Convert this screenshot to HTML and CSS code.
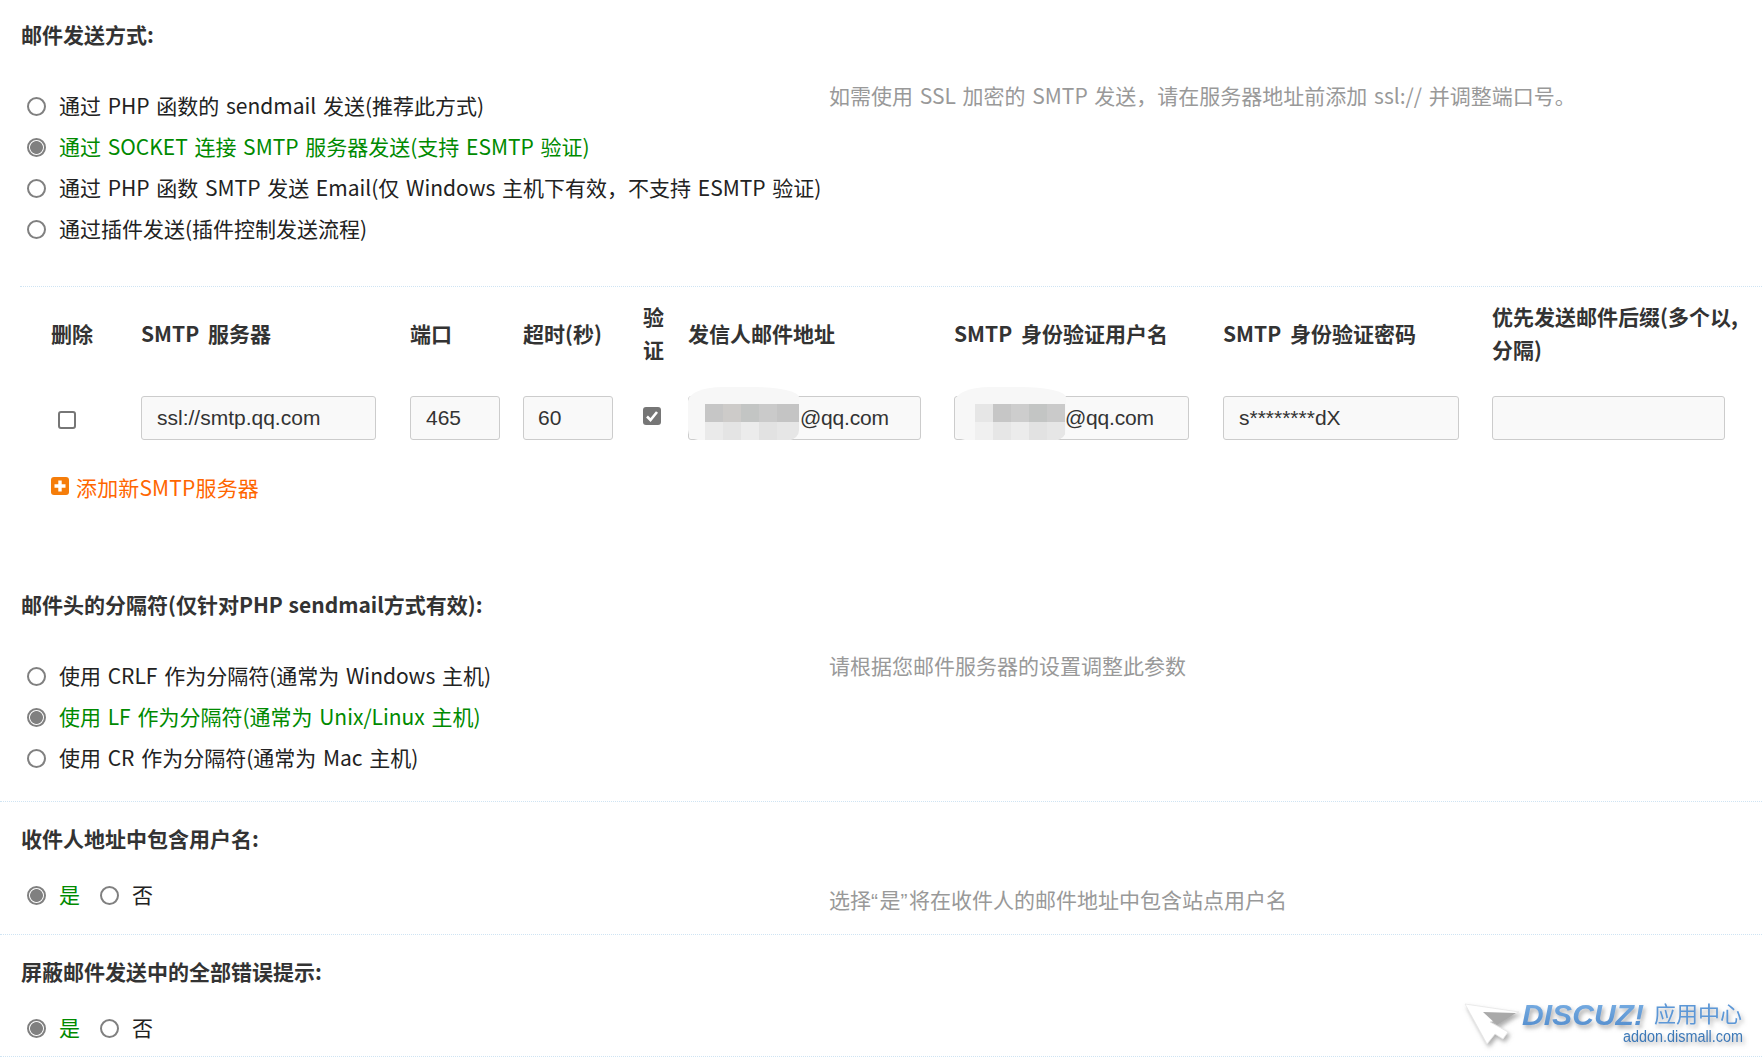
FILE: index.html
```html
<!DOCTYPE html>
<html lang="zh-CN">
<head>
<meta charset="utf-8">
<title>邮件设置</title>
<link rel="stylesheet" href="styles.css">
</head>
<body>
<div class="page">
  <section class="section s1">
    <h3 class="title">邮件发送方式:</h3>
    <div class="body b-large">
      <div class="options">
        <label class="opt"><input type="radio" name="m">通过 PHP 函数的 sendmail 发送(推荐此方式)</label>
        <label class="opt on"><input type="radio" name="m" checked>通过 SOCKET 连接 SMTP 服务器发送(支持 ESMTP 验证)</label>
        <label class="opt"><input type="radio" name="m">通过 PHP 函数 SMTP 发送 Email(仅 Windows 主机下有效，不支持 ESMTP 验证)</label>
        <label class="opt"><input type="radio" name="m">通过插件发送(插件控制发送流程)</label>
      </div>
      <p class="hint">如需使用 SSL 加密的 SMTP 发送，请在服务器地址前添加 ssl:// 并调整端口号。</p>
    </div>
  </section>

  <section class="smtp">
    <div class="grid head">
      <div>删除</div><div>SMTP 服务器</div><div>端口</div><div>超时(秒)</div><div class="narrow">验证</div><div>发信人邮件地址</div><div>SMTP 身份验证用户名</div><div>SMTP 身份验证密码</div><div class="suffix">优先发送邮件后缀(多个以,分隔)</div>
    </div>
    <div class="grid row">
      <div class="cell"><input type="checkbox" class="box del"></div>
      <div class="cell"><input class="txt w234" value="ssl://smtp.qq.com"></div>
      <div class="cell"><input class="txt w90" value="465"></div>
      <div class="cell"><input class="txt w90 p60" value="60"></div>
      <div class="cell"><input type="checkbox" class="box auth" checked></div>
      <div class="cell masked"><input class="txt w232 mailtxt" value="@qq.com"><span class="mask m1"></span></div>
      <div class="cell masked"><input class="txt w235 mailtxt2" value="@qq.com"><span class="mask m2"></span></div>
      <div class="cell"><input class="txt w236" value="s********dX"></div>
      <div class="cell"><input class="txt w233" value=""></div>
    </div>
    <a class="add"><svg class="plus" viewBox="0 0 18 18" aria-hidden="true"><rect width="18" height="18" rx="3" fill="#f57d0a"/><path d="M7.3 3.5h3.4v3.8h3.8v3.4h-3.8v3.8H7.3v-3.8H3.5V7.3h3.8z" fill="#fff"/></svg>添加新SMTP服务器</a>
  </section>

  <section class="section s2">
    <h3 class="title">邮件头的分隔符(仅针对PHP sendmail方式有效):</h3>
    <div class="body b-large">
      <div class="options">
        <label class="opt"><input type="radio" name="s">使用 CRLF 作为分隔符(通常为 Windows 主机)</label>
        <label class="opt on"><input type="radio" name="s" checked>使用 LF 作为分隔符(通常为 Unix/Linux 主机)</label>
        <label class="opt"><input type="radio" name="s">使用 CR 作为分隔符(通常为 Mac 主机)</label>
      </div>
      <p class="hint">请根据您邮件服务器的设置调整此参数</p>
    </div>
  </section>

  <section class="section s3">
    <h3 class="title">收件人地址中包含用户名:</h3>
    <div class="body">
      <div class="options inline">
        <label class="opt on"><input type="radio" name="u" checked>是</label>
        <label class="opt"><input type="radio" name="u">否</label>
      </div>
      <p class="hint">选择<span class="q">“</span>是<span class="q">”</span>将在收件人的邮件地址中包含站点用户名</p>
    </div>
  </section>

  <section class="section s4">
    <h3 class="title">屏蔽邮件发送中的全部错误提示:</h3>
    <div class="body">
      <div class="options inline">
        <label class="opt on"><input type="radio" name="e" checked>是</label>
        <label class="opt"><input type="radio" name="e">否</label>
      </div>
    </div>
  </section>

  <svg class="logo" viewBox="0 0 300 73" aria-label="Discuz! 应用中心">
    <defs>
      <filter id="sh" x="-10%" y="-20%" width="125%" height="160%"><feDropShadow dx="2" dy="3" stdDeviation="2" flood-color="#777" flood-opacity=".6"/></filter>
      <linearGradient id="lg" x1="0" y1="0" x2="0" y2="1"><stop offset="0" stop-color="#7db2e6"/><stop offset="1" stop-color="#4f8acb"/></linearGradient>
    </defs>
    <g filter="url(#sh)">
      <path d="M3 14 L57 22 L28 32 L46 42 L41 49 L33 44 L25 54 Z" fill="#fff" stroke="#e4e4e4" stroke-width=".7"/>
      <path d="M21 22 L54 23 L35 35 Z" fill="#a9a9a9"/>
      <text class="lg-d" x="60" y="35" textLength="122" lengthAdjust="spacingAndGlyphs" fill="url(#lg)">DISCUZ!</text>
      <text class="lg-c" x="192" y="32">应用中心</text>
      <text class="lg-u" x="161" y="52" textLength="120" lengthAdjust="spacingAndGlyphs">addon.dismall.com</text>
    </g>
  </svg>
</div>
</body>
</html>
```

FILE: styles.css
```css
* { box-sizing: border-box; }
html, body { margin: 0; padding: 0; background: #fff; }
body { font-family: "Noto Sans CJK SC", "Liberation Sans", sans-serif; font-size: 21px; color: #222; overflow: hidden; }
.page { position: relative; width: 1762px; height: 1063px; overflow: hidden; }

.section { border-bottom: 1px dotted #cfe4f3; }
.title { margin: 0 0 2px 21px; font-size: 21px; font-weight: 700; line-height: 32px; color: #333; word-spacing: 1px; }
.body { display: flex; padding-left: 27px; }
.options { width: 802px; flex: none; padding-top: 19px; }
.b-large .options { padding-top: 34px; }
.inline { display: flex; gap: 20px; }
.hint { margin: 0; padding-top: 27px; line-height: 32px; color: #999; font-size: 21px; word-spacing: 2px; white-space: nowrap; }
.q { font-family: "Liberation Sans", sans-serif; line-height: 1; letter-spacing: 1.5px; }

.opt { display: flex; align-items: center; gap: 13px; height: 41px; padding-bottom: 4px; font-size: 21px; word-spacing: 2px; color: #222; white-space: nowrap; }
.opt.on { color: #008a00; }
.opt input { appearance: none; -webkit-appearance: none; flex: none; width: 19px; height: 19px; margin: 4px 0 0; border: 2px solid #808080; border-radius: 50%; background: #fff; }
.opt input:checked { background: radial-gradient(circle, #808080 0 6px, #fff 6.8px); }

.s1 { margin-left: 20px; padding-top: 18px; padding-bottom: 36px; }
.s1 .title { margin-left: 1px; }
.s1 .body { padding-left: 7px; }
.s2 { padding-top: 0; padding-bottom: 22px; }
.s3 { padding-top: 20px; padding-bottom: 18px; }
.s4 { padding-top: 20px; padding-bottom: 7px; }

.smtp { padding-left: 51px; height: 301px; }
.grid { display: grid; grid-template-columns: 90px 269px 113px 120px 45px 266px 269px 269px 250px; }
.head { height: 94px; padding-bottom: 2px; align-items: center; font-size: 21px; font-weight: 700; line-height: 33px; color: #333; word-spacing: 4px; }
.narrow { width: 22px; }
.suffix { width: 250px; }
.row { margin-top: 15px; height: 44px; }
.cell { position: relative; }
.txt { display: block; height: 44px; padding: 0 0 0 15px; border: 1px solid #ccc; border-radius: 3px; background: #f9f9f9; font-family: "Liberation Sans", sans-serif; font-size: 21px; color: #333; }
.w234 { width: 235px; }
.w90 { width: 90px; }
.p60 { padding-left: 14px; }
.w232 { width: 233px; }
.w235 { width: 235px; }
.w236 { width: 236px; }
.w233 { width: 233px; }
.mailtxt { padding-left: 111px; letter-spacing: -.2px; }
.mailtxt2 { padding-left: 110px; letter-spacing: -.2px; }
.box { appearance: none; -webkit-appearance: none; display: block; margin: 0; width: 18px; height: 18px; border-radius: 3px; }
.del { margin: 15px 0 0 7px; border: 2px solid #767676; background: #fff; }
.auth { margin: 11px 0 0; background: #767676 url("data:image/svg+xml,%3Csvg xmlns='http://www.w3.org/2000/svg' viewBox='0 0 18 18'%3E%3Cpath d='M4 9.5l3.5 3.5L14 5' fill='none' stroke='%23fff' stroke-width='2.6'/%3E%3C/svg%3E") center/contain no-repeat; }

.mask { position: absolute; top: -9px; height: 53px; width: 111px; background-color: #f7f7f7; background-repeat: no-repeat; clip-path: inset(0 0 0 0 round 35px 45px 10px 10px / 14px 10px 10px 10px); }
.m1 { left: 0; background-image:
  linear-gradient(90deg, #c6c6c6 0 18px, #cdcbc9 18px 36px, #c3c5c4 36px 54px, #cacaca 54px 72px, #c4c4c4 72px 100%),
  linear-gradient(90deg, #eaeaea 0 18px, #e4e4e4 18px 36px, #ececec 36px 54px, #e2e2e2 54px 72px, #e6e6e6 72px 100%);
  background-size: 94px 18px, 94px 18px; background-position: 17px 17px, 17px 35px; }
.m2 { left: 1px; background-image:
  linear-gradient(90deg, #e6e6e6 0 18px, #c6c6c6 18px 36px, #cdcdcd 36px 54px, #c3c5c4 54px 72px, #cacaca 72px 100%),
  linear-gradient(90deg, #f0f0f0 0 18px, #e6e6e6 18px 36px, #ececec 36px 54px, #e2e2e2 54px 72px, #e6e6e6 72px 100%);
  background-size: 90px 18px, 90px 18px; background-position: 20px 17px, 20px 35px; }

.add { display: flex; align-items: center; gap: 7px; margin-top: 32px; height: 32px; padding-bottom: 2px; color: #f60; font-size: 21px; letter-spacing: .15px; }
.plus { width: 18px; height: 18px; flex: none; margin-top: -2px; }

.logo { position: absolute; left: 1462px; top: 990px; width: 300px; height: 73px; }
.lg-d { font-family: "Liberation Sans", sans-serif; font-weight: 700; font-style: italic; font-size: 30px; }
.lg-c { font-family: "Noto Sans CJK SC", sans-serif; font-size: 22px; fill: #5b97d6; }
.lg-u { font-family: "Liberation Sans", sans-serif; font-size: 16px; fill: #3d7ab8; }
```
